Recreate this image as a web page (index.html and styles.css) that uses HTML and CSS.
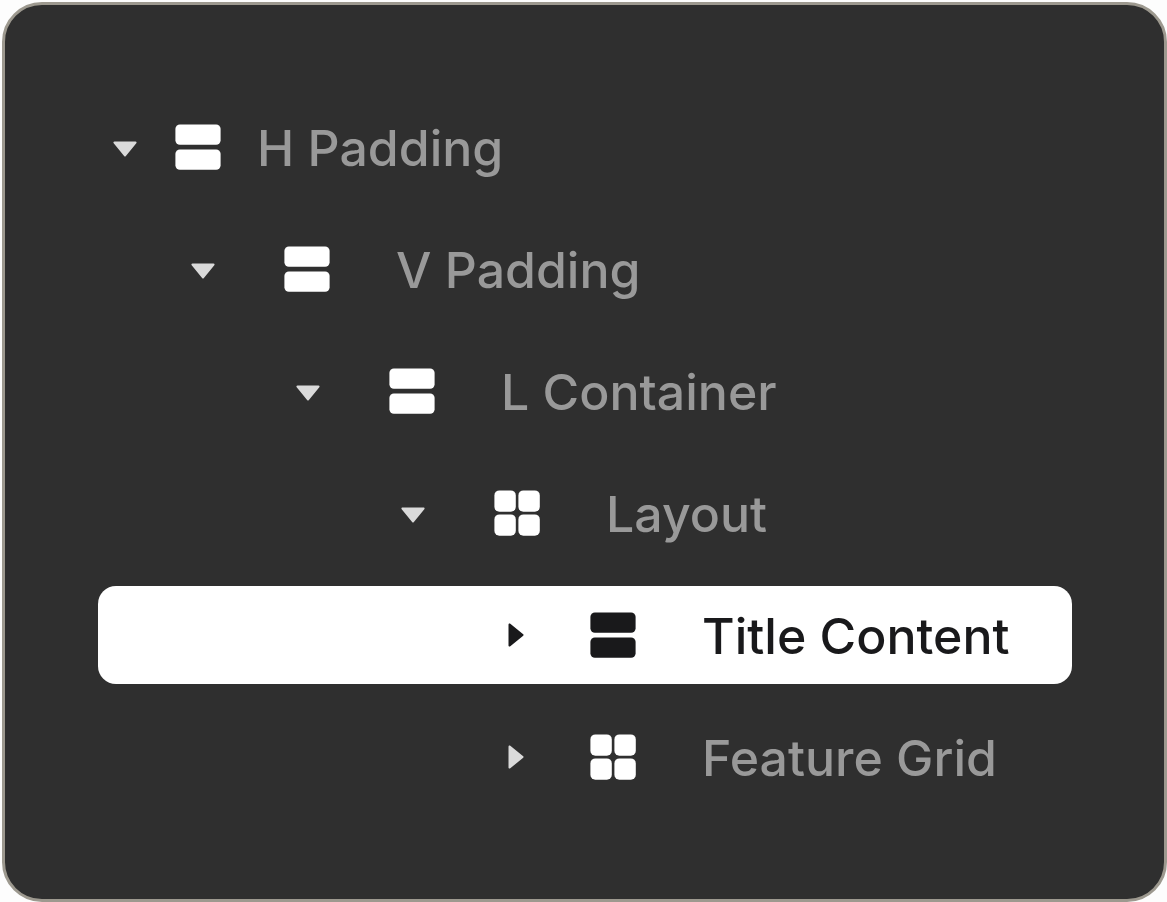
FILE: index.html
```html
<!DOCTYPE html>
<html lang="en">
<head>
<meta charset="utf-8">
<title>Layers</title>
<link rel="stylesheet" href="styles.css">
</head>
<body>
<svg class="sprite" aria-hidden="true">
  <symbol id="down" viewBox="0 0 24 16"><path d="M1.500.500h21c1 0 1.400 1 .8 1.800L12.700 15.200c-.4.500-1 .5-1.400 0L.7 2.300C.1 1.500.5.500 1.500.500z"/></symbol>
  <symbol id="right" viewBox="0 0 16 24"><path d="M.500 1.500v21c0 1 1 1.400 1.800.8L15.200 12.700c.5-.4.500-1 0-1.400L2.300.7C1.500.1.500.5.500 1.500z"/></symbol>
  <symbol id="stack" viewBox="0 0 46 46"><rect x=".4" y=".4" width="45.200" height="20.400" rx="4.500"/><rect x=".4" y="25.400" width="45.200" height="20.400" rx="4.500"/></symbol>
  <symbol id="grid" viewBox="0 0 46 46"><rect x=".4" y=".4" width="21.400" height="21.400" rx="5"/><rect x="24.400" y=".4" width="21.400" height="21.400" rx="5"/><rect x=".4" y="24.400" width="21.400" height="21.400" rx="5"/><rect x="24.400" y="24.400" width="21.400" height="21.400" rx="5"/></symbol>
</svg>
<main class="panel">
  <ul class="tree">
    <li class="row level-1"><button class="toggle" aria-label="Collapse H Padding"><svg class="down"><use href="#down"/></svg></button><svg class="icon"><use href="#stack"/></svg><span class="label">H Padding</span></li>
    <li class="row level-2"><button class="toggle" aria-label="Collapse V Padding"><svg class="down"><use href="#down"/></svg></button><svg class="icon"><use href="#stack"/></svg><span class="label">V Padding</span></li>
    <li class="row level-3"><button class="toggle" aria-label="Collapse L Container"><svg class="down"><use href="#down"/></svg></button><svg class="icon"><use href="#stack"/></svg><span class="label">L Container</span></li>
    <li class="row level-4"><button class="toggle" aria-label="Collapse Layout"><svg class="down"><use href="#down"/></svg></button><svg class="icon"><use href="#grid"/></svg><span class="label">Layout</span></li>
    <li class="row level-5 selected"><button class="toggle" aria-label="Expand Title Content"><svg class="right"><use href="#right"/></svg></button><svg class="icon"><use href="#stack"/></svg><span class="label">Title Content</span></li>
    <li class="row level-5"><button class="toggle" aria-label="Expand Feature Grid"><svg class="right"><use href="#right"/></svg></button><svg class="icon"><use href="#grid"/></svg><span class="label">Feature Grid</span></li>
  </ul>
</main>
</body>
</html>
```
FILE: styles.css
```css
* { box-sizing: border-box; }
body { margin: 0; background: #fdfdfd; font-family: Inter, "Liberation Sans", sans-serif; }
.sprite { display: block; width: 0; height: 0; }
.panel {
  min-height: calc(100vh - 2px);
  margin: 2px 0 0 2px;
  padding: 93px 92px 90px 93px;
  border: 3px solid #9d998f;
  border-radius: 40px;
  background: #2f2f2f;
}
.tree { display: grid; gap: 24px; margin: 0; padding: 0; list-style: none; }
.row {
  display: flex;
  align-items: center;
  height: 98px;
  border-radius: 18px;
  color: #fff;
}
.toggle {
  display: flex;
  flex: none;
  padding: 4px 0 0;
  border: 0;
  background: none;
  color: #dadada;
}
svg { fill: currentColor; }
.down { width: 24px; height: 16px; }
.right { width: 16px; height: 24px; }
.icon { flex: none; width: 46px; height: 46px; margin: 0 66px 0 69px; }
.label { padding-top: 2px; color: #999; font-size: 50px; line-height: 60px; font-weight: 460; white-space: nowrap; }
.level-1 { padding-left: 15px; }
.level-1 .icon { margin: 0 36px 0 38px; }
.level-2 { padding-left: 93px; }
.level-3 { padding-left: 198px; }
.level-4 { padding-left: 303px; }
.level-5 { padding-left: 410px; }
.level-5 .toggle { padding-top: 0; }
.level-5 .icon { margin-left: 66px; }
.selected { background: #fff; }
.selected, .selected .toggle, .selected .label { color: #19191b; }
.selected .label { font-weight: 500; }
```
